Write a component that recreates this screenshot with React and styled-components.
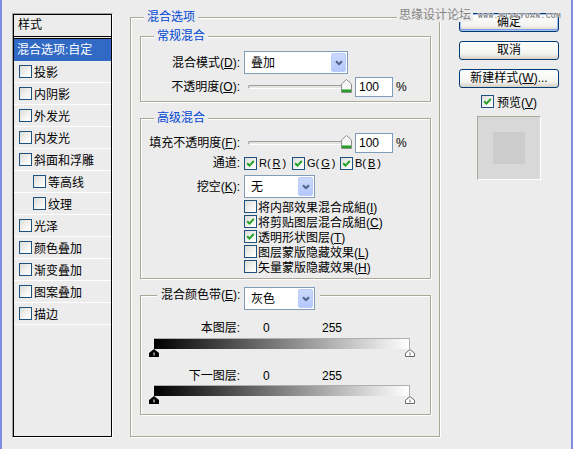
import React from 'react';
import styled, { createGlobalStyle } from 'styled-components';

const FONT = `"Liberation Sans", "Noto Sans CJK SC", sans-serif`;

const GlobalStyle = createGlobalStyle`
  * { box-sizing: border-box; }
  body {
    margin: 0;
    background: #ececec;
  }
`;

const Window = styled.div`
  position: relative;
  width: 573px;
  height: 449px;
  display: flex;
  align-items: flex-start;
  padding-left: 10px;
  background: #ececec;
  border-left: 2px solid #7b8ee0;
  border-right: 2px solid #7b8ee0;
  font-family: ${FONT};
  font-size: 12px;
  color: #000;
  overflow: hidden;
`;

/* ---------- left style list ---------- */

const StyleList = styled.div`
  margin-top: 13px;
  width: 101px;
  height: 425px;
  padding: 1px;
  border: 1px solid;
  border-color: #a0a0a0 #fff #fff #a0a0a0;
  box-shadow: inset 1px 1px 0 #000, inset -1px -1px 0 #000;
  display: flex;
  flex-direction: column;
`;

const ListHeader = styled.div`
  height: 22px;
  line-height: 20px;
  padding-left: 4px;
  border-bottom: 1px solid #000;
`;

const SelectedRow = styled.div`
  margin-top: 1px;
  height: 23px;
  line-height: 22px;
  padding-left: 3px;
  border-top: 1px solid #000;
  background: #316ac5;
  color: #fff;
  white-space: nowrap;
`;

const ListRow = styled.div`
  height: 22px;
  display: flex;
  align-items: center;
  gap: 2px;
  padding-left: ${p => (p.$indent ? 19 : 5)}px;
  border-bottom: 1px solid #fff;
`;

/* ---------- checkbox ---------- */

const Box = styled.span`
  flex: none;
  width: 13px;
  height: 13px;
  border: 1px solid #1c5180;
  background: linear-gradient(135deg, #dcdcd7 0%, #f4f4f2 60%, #fff 100%);
  display: inline-flex;
  align-items: center;
  justify-content: center;
`;

function Check({ on }) {
  return (
    <Box>
      {on && (
        <svg width="9" height="9" viewBox="0 0 9 9">
          <path d="M1.2 4.2 L3.5 6.6 L7.8 1.8" fill="none" stroke="#21a121" strokeWidth="2" />
        </svg>
      )}
    </Box>
  );
}

/* ---------- frames ---------- */

const Frame = styled.fieldset`
  margin: ${p => p.$top || 0}px 0 0;
  padding: 0;
  min-width: 0;
  border: 1px solid #aca899;
  box-shadow: inset 1px 1px 0 #fff, 1px 1px 0 #fff;
`;

const OuterFrame = styled(Frame)`
  margin: 9px 0 0 17px;
  width: 310px;
  height: 428px;
  flex: none;
`;

const Legend = styled.legend`
  margin-left: 13px;
  padding: 0 3px;
  height: 16px;
  line-height: 16px;
  color: #0046d5;
  background: #ececec;
`;

const BandLegend = styled.legend`
  margin-left: 16px;
  padding: 0 5px 0 4px;
  height: 16px;
  display: flex;
  align-items: flex-start;
  background: #ececec;
`;

const OuterBody = styled.div`
  padding: 0 8px 0 9px;
`;

const FrameBody = styled.div`
  padding: ${p => p.$pad};
`;

const FieldRow = styled.div`
  display: flex;
  align-items: center;
  height: ${p => p.$h}px;
  margin-top: ${p => p.$top || 0}px;
`;

const Label = styled.span`
  flex: none;
  width: ${p => p.$w || 99}px;
  margin-right: 4px;
  text-align: right;
  white-space: nowrap;
  line-height: 16px;
`;

/* ---------- select ---------- */

const SelectBox = styled.div`
  flex: none;
  width: ${p => p.$w}px;
  height: 23px;
  padding: 1px;
  border: 1px solid #7f9db9;
  background: #fff;
  display: flex;
`;

const SelectText = styled.span`
  flex: 1;
  padding-left: 5px;
  line-height: 20px;
`;

const DropButton = styled.span`
  width: 15px;
  border: 1px solid #b8cbf9;
  border-radius: 2px;
  background: linear-gradient(#cbd9fd, #b4c8fb);
  display: flex;
  align-items: center;
  justify-content: center;
`;

function Select({ w, value }) {
  return (
    <SelectBox $w={w}>
      <SelectText>{value}</SelectText>
      <DropButton>
        <svg width="8" height="6" viewBox="0 0 8 6">
          <path d="M1 1.2 L4 4.2 L7 1.2" fill="none" stroke="#4d6185" strokeWidth="2" />
        </svg>
      </DropButton>
    </SelectBox>
  );
}

/* ---------- slider ---------- */

const SliderWrap = styled.div`
  position: relative;
  flex: none;
  width: 107px;
  height: 20px;
  padding-left: 4px;
  display: flex;
  align-items: center;
`;

const Track = styled.div`
  width: 95px;
  height: 4px;
  border-radius: 2px;
  border: 1px solid;
  border-color: #9d9d9d #fff #fff #9d9d9d;
  background: #e4e3de;
`;

const ThumbSpot = styled.svg`
  position: absolute;
  left: 97px;
  top: 2px;
`;

const NumInput = styled.div`
  flex: none;
  width: 38px;
  height: 20px;
  margin-left: 4px;
  padding-left: 3px;
  border: 1px solid #7f9db9;
  background: #fff;
  line-height: 18px;
`;

const Percent = styled.span`
  margin-left: 3px;
`;

function Slider() {
  return (
    <>
      <SliderWrap>
        <Track />
        <ThumbSpot width="11" height="14" viewBox="0 0 11 14">
          <path d="M5.5 0.5 L10.5 5 V13.5 H0.5 V5 Z" fill="#f7f7f5" stroke="#8d8d8d" />
          <rect x="1" y="10.5" width="9" height="2.5" fill="#21a121" />
        </ThumbSpot>
      </SliderWrap>
      <NumInput>100</NumInput>
      <Percent>%</Percent>
    </>
  );
}

/* ---------- advanced blending ---------- */

const Channel = styled.span`
  display: inline-flex;
  align-items: center;
  gap: 2px;
  width: 48px;
  font-size: 11px;
  white-space: nowrap;
`;

const OptionList = styled.div`
  margin: 1px 0 0 103px;
`;

const OptionRow = styled.div`
  height: 15px;
  display: flex;
  align-items: center;
  gap: 1px;
  white-space: nowrap;
`;

/* ---------- blend-if ---------- */

const LayerRow = styled.div`
  display: flex;
  height: 16px;
  line-height: 16px;
  margin-top: ${p => p.$top}px;
`;

const Num = styled.span`
  width: ${p => p.$w || 'auto'};
  margin-left: ${p => p.$left || 0}px;
`;

const Ramp = styled.div`
  margin: ${p => p.$top}px 0 0 13px;
  width: 256px;
  height: 11px;
  border-top: 1px solid #b0b0b0;
  border-right: 1px solid #b0b0b0;
  background: linear-gradient(to right, #000, #fff);
`;

const ThumbRow = styled.div`
  margin-left: 8px;
  width: 266px;
  height: 8px;
  display: flex;
  justify-content: space-between;
`;

function RampThumbs() {
  return (
    <ThumbRow>
      <svg width="10" height="8" viewBox="0 0 10 8">
        <path d="M5 0 L10 4 V8 H0 V4 Z" fill="#000" />
        <rect x="4.5" y="3.5" width="1" height="3" fill="#fff" />
      </svg>
      <svg width="10" height="8" viewBox="0 0 10 8">
        <path d="M5 0.6 L9.5 4.2 V7.5 H0.5 V4.2 Z" fill="#fff" stroke="#6a6a6a" />
        <rect x="4.5" y="3.5" width="1" height="3" fill="#6a6a6a" />
      </svg>
    </ThumbRow>
  );
}

/* ---------- right column ---------- */

const Side = styled.div`
  flex: none;
  margin: 13px 0 0 19px;
  width: 100px;
  display: flex;
  flex-direction: column;
  align-items: center;
`;

const Button = styled.div`
  width: 100px;
  height: 19px;
  margin-top: ${p => p.$top || 0}px;
  border: 1px solid #003c74;
  border-radius: 3px;
  background: linear-gradient(#ffffff, #f3f3ef 70%, #d6d0c5);
  box-shadow: ${p => (p.$default ? 'inset 0 0 0 1px #a8c0f0, inset 0 -1px 0 1px #7e9ee8' : 'none')};
  text-align: center;
  line-height: 17px;
`;

const PreviewCheck = styled.div`
  margin-top: 7px;
  height: 13px;
  display: flex;
  align-items: center;
  gap: 3px;
`;

const PreviewBox = styled.div`
  margin-top: 8px;
  width: 64px;
  height: 64px;
  border: 1px solid;
  border-color: #aca899 #fff #fff #aca899;
  background: #d8d8d8;
  display: flex;
  align-items: center;
  justify-content: center;
`;

const PreviewSwatch = styled.div`
  width: 32px;
  height: 32px;
  background: #cccccc;
`;

/* ---------- watermark ---------- */

const Watermark = styled.div`
  position: absolute;
  top: 8px;
  left: 395px;
  display: flex;
  align-items: center;
  height: 14px;
  pointer-events: none;
`;

const MarkCn = styled.span`
  padding: 0 2px;
  background: #ececec;
  color: #858585;
  line-height: 14px;
`;

const MarkUrl = styled.span`
  margin-left: 5px;
  font-family: "Liberation Mono", monospace;
  font-size: 8px;
  font-weight: bold;
  letter-spacing: 0.4px;
  color: #8c8c8c;
  text-shadow: 0 0 1px #fff, 0 0 1px #fff;
`;

const styleItems = [
  { name: '投影' },
  { name: '内阴影' },
  { name: '外发光' },
  { name: '内发光' },
  { name: '斜面和浮雕' },
  { name: '等高线', indent: true },
  { name: '纹理', indent: true },
  { name: '光泽' },
  { name: '颜色叠加' },
  { name: '渐变叠加' },
  { name: '图案叠加' },
  { name: '描边' },
];

const options = [
  { text: '将内部效果混合成組', key: 'I', on: false },
  { text: '将剪贴图层混合成組', key: 'C', on: true },
  { text: '透明形状图层', key: 'T', on: true },
  { text: '图层蒙版隐藏效果', key: 'L', on: false },
  { text: '矢量蒙版隐藏效果', key: 'H', on: false },
];

export default function App() {
  return (
    <Window>
      <GlobalStyle />

      <StyleList>
        <ListHeader>样式</ListHeader>
        <SelectedRow>混合选项:自定</SelectedRow>
        {styleItems.map(item => (
          <ListRow key={item.name} $indent={item.indent}>
            <Check />
            <span>{item.name}</span>
          </ListRow>
        ))}
      </StyleList>

      <OuterFrame>
        <Legend>混合选项</Legend>
        <OuterBody>
          <Frame $top={3}>
            <Legend>常规混合</Legend>
            <FrameBody $pad="7px 0 4px">
              <FieldRow $h={23}>
                <Label>混合模式(<u>D</u>):</Label>
                <Select w={104} value="叠加" />
              </FieldRow>
              <FieldRow $h={20} $top={3}>
                <Label>不透明度(<u>O</u>):</Label>
                <Slider />
              </FieldRow>
            </FrameBody>
          </Frame>

          <Frame $top={8}>
            <Legend>高级混合</Legend>
            <FrameBody $pad="7px 0 4px">
              <FieldRow $h={20}>
                <Label>填充不透明度(<u>F</u>):</Label>
                <Slider />
              </FieldRow>
              <FieldRow $h={16} $top={2}>
                <Label>通道:</Label>
                <Channel><Check on />R(<u>R</u>)</Channel>
                <Channel><Check on />G(<u>G</u>)</Channel>
                <Channel><Check on />B(<u>B</u>)</Channel>
              </FieldRow>
              <FieldRow $h={23} $top={4}>
                <Label>挖空(<u>K</u>):</Label>
                <Select w={71} value="无" />
              </FieldRow>
              <OptionList>
                {options.map(o => (
                  <OptionRow key={o.key}>
                    <Check on={o.on} />
                    <span>{o.text}(<u>{o.key}</u>)</span>
                  </OptionRow>
                ))}
              </OptionList>
            </FrameBody>
          </Frame>

          <Frame $top={8}>
            <BandLegend>
              <Label $w={79}>混合颜色带(<u>E</u>):</Label>
              <Select w={71} value="灰色" />
            </BandLegend>
            <FrameBody $pad="17px 0 10px">
              <LayerRow $top={0}>
                <Label>本图层:</Label>
                <Num $left={19} $w="59px">0</Num>
                <Num>255</Num>
              </LayerRow>
              <Ramp $top={2} />
              <RampThumbs />
              <LayerRow $top={11}>
                <Label>下一图层:</Label>
                <Num $left={19} $w="59px">0</Num>
                <Num>255</Num>
              </LayerRow>
              <Ramp $top={1} />
              <RampThumbs />
            </FrameBody>
          </Frame>
        </OuterBody>
      </OuterFrame>

      <Side>
        <Button $default>确定</Button>
        <Button $top={9}>取消</Button>
        <Button $top={9}>新建样式(<u>W</u>)...</Button>
        <PreviewCheck>
          <Check on />
          <span>预览(<u>V</u>)</span>
        </PreviewCheck>
        <PreviewBox>
          <PreviewSwatch />
        </PreviewBox>
      </Side>

      <Watermark>
        <MarkCn>思缘设计论坛</MarkCn>
        <MarkUrl>WWW.MISSYUAN.COM</MarkUrl>
      </Watermark>
    </Window>
  );
}
